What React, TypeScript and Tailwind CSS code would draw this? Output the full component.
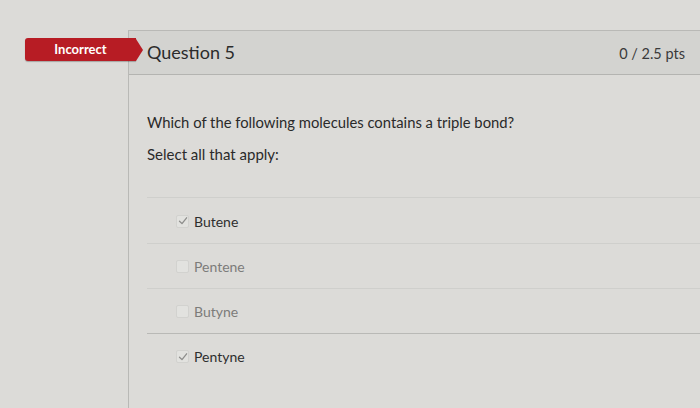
import React from 'react'

type Answer = { label: string; checked: boolean }

const ANSWERS: Answer[] = [
  { label: 'Butene', checked: true },
  { label: 'Pentene', checked: false },
  { label: 'Butyne', checked: false },
  { label: 'Pentyne', checked: true },
]

function Check({ checked }: { checked: boolean }) {
  return (
    <span className="flex h-[13px] w-[13px] items-center justify-center rounded-[2px] border border-[#d2d2cf] bg-[#e2e2df]">
      {checked && (
        <svg width="10" height="10" viewBox="0 0 10 10" fill="none">
          <path d="M1.5 5.2 L4 7.6 L8.6 1.8" stroke="#8e8e8c" strokeWidth="1.3" strokeLinecap="round" strokeLinejoin="round" />
        </svg>
      )}
    </span>
  )
}

export default function App() {
  return (
    <div
      className="flex h-[408px] w-[700px] overflow-hidden bg-[#dcdbd8] pt-[30px]"
      style={{ fontFamily: 'Lato, "Open Sans", sans-serif' }}
    >
      <div className="w-[128px] shrink-0" />
      <div className="relative flex flex-1 flex-col border-l border-t border-[#b9b9b6]">
        {/* badge */}
        <div className="absolute left-[-104px] top-[7px] flex h-[23px] items-center">
          <div className="flex h-full w-[111px] items-center justify-center rounded-l-[3px] bg-[#b71c24] text-[13px] font-bold text-white shadow-[0_1px_1px_rgba(0,0,0,0.25)]">
            Incorrect
          </div>
          <div className="h-0 w-0 border-y-[11.5px] border-l-[7px] border-y-transparent border-l-[#b71c24]" />
        </div>

        <div className="flex h-[44px] items-center justify-between border-b border-[#b4b4b1] bg-[#d3d3d0] pl-[18px] pr-[15px]">
          <span className="text-[18px] text-[#2b2b2b]">Question 5</span>
          <span className="mt-[3px] text-[14.5px] text-[#3a3a3a]">0 / 2.5 pts</span>
        </div>

        <div className="flex flex-col pl-[18px]">
          <p className="mt-[37px] text-[14.8px] leading-[20px] text-[#2a2a2a]">
            Which of the following molecules contains a triple bond?
          </p>
          <p className="mt-[12px] text-[15px] leading-[20px] text-[#2a2a2a]">Select all that apply:</p>

          <div className="mt-[33px] flex flex-col border-t border-[#cfcfcc] pt-[1px]">
            {ANSWERS.map((a, i) => (
              <div
                key={a.label}
                className={`flex h-[45px] items-center gap-[5px] pl-[29px] ${
                  i < ANSWERS.length - 1 ? (i === 2 ? 'border-b border-[#b9b9b6]' : 'border-b border-[#cfcfcc]') : ''
                }`}
              >
                <Check checked={a.checked} />
                <span className={`text-[14px] ${a.checked ? 'text-[#2e2e2e]' : 'text-[#7c7c7a]'}`}>{a.label}</span>
              </div>
            ))}
          </div>
        </div>
      </div>
    </div>
  )
}
